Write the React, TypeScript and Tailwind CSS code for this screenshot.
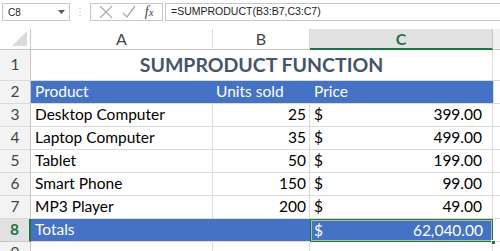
const rows = [
  { n: 3, product: 'Desktop Computer', units: '25', price: '399.00' },
  { n: 4, product: 'Laptop Computer', units: '35', price: '499.00' },
  { n: 5, product: 'Tablet', units: '50', price: '199.00' },
  { n: 6, product: 'Smart Phone', units: '150', price: '99.00' },
  { n: 7, product: 'MP3 Player', units: '200', price: '49.00' },
];

function RowHead({ n, active }: { n: number | string; active?: boolean }) {
  return (
    <div
      className={
        active
          ? 'w-[31px] shrink-0 flex items-center justify-center bg-[#e1e1e1] border-r-2 border-r-[#217346] border-b border-b-[#c6c6c6] text-[#217346] font-bold'
          : 'w-[31px] shrink-0 flex items-center justify-center bg-[#f3f3f3] border-r border-r-[#c6c6c6] border-b border-b-[#dadada] text-[#444]'
      }
    >
      {n}
    </div>
  );
}

export default function App() {
  return (
    <div className="w-[500px] h-[251px] overflow-hidden bg-white font-['Lato',sans-serif] text-[15.5px] text-black">
      {/* Formula bar */}
      <div className="h-[29px] flex items-start pt-[3px] font-['Liberation_Sans',sans-serif] text-[11px] text-[#222] bg-white">
        <div className="ml-[2px] w-[68px] h-[18px] border border-[#c6c6c6] flex items-center justify-between pl-[5px] pr-[4px]">
          <span className="text-[10px]">C8</span>
          <svg width="7" height="4" viewBox="0 0 7 4">
            <path d="M0 0 L7 0 L3.5 4 Z" fill="#555" />
          </svg>
        </div>
        <div className="w-[20px] h-[18px] flex items-center justify-center text-[#bbb] text-[10px] leading-none">⋮</div>
        <div className="w-[73px] h-[18px] border border-[#c6c6c6] flex items-center justify-around px-[4px]">
          <svg width="14" height="14" viewBox="0 0 14 14">
            <path d="M1 1 L13 13 M13 1 L1 13" stroke="#aaa" strokeWidth="1.2" fill="none" />
          </svg>
          <svg width="14" height="14" viewBox="0 0 14 14">
            <path d="M1 8 L5 12 L13 1" stroke="#aaa" strokeWidth="1.3" fill="none" />
          </svg>
          <span className="font-['Liberation_Serif',serif] italic text-[14px] text-[#444] leading-none">
            f<span className="text-[11px]">x</span>
          </span>
        </div>
        <div className="ml-[2px] flex-1 h-[18px] border border-r-0 border-[#c6c6c6] flex items-center pl-[5px] text-[10.5px]">
          =SUMPRODUCT(B3:B7,C3:C7)
        </div>
      </div>

      {/* Column headers */}
      <div className="flex h-[21px] text-[#444] text-[16px]">
        <div className="w-[31px] shrink-0 bg-white border-r border-r-[#c6c6c6] border-b border-b-[#c6c6c6] relative">
          <div className="absolute right-[3px] bottom-[3px] w-0 h-0 border-l-[15px] border-l-transparent border-b-[15px] border-b-[#dadada]" />
        </div>
        <div className="w-[182px] shrink-0 flex items-center justify-center bg-white border-r border-r-[#dadada] border-b border-b-[#c6c6c6]">A</div>
        <div className="w-[97px] shrink-0 flex items-center justify-center bg-white border-r border-r-[#dadada] border-b border-b-[#c6c6c6]">B</div>
        <div className="w-[183px] shrink-0 flex items-center justify-center bg-[#e1e1e1] border-r border-r-[#c6c6c6] border-b-2 border-b-[#217346] text-[#217346] font-bold">C</div>
        <div className="flex-1 bg-[#f0f0f0] border-b border-b-[#c6c6c6]" />
      </div>

      {/* Row 1 */}
      <div className="flex h-[31px]">
        <RowHead n={1} />
        <div className="w-[462px] shrink-0 flex items-center justify-center border-r border-r-[#dadada] border-b border-b-[#dadada] text-[#44546a] font-bold text-[19.5px]">
          SUMPRODUCT FUNCTION
        </div>
        <div className="flex-1 border-b border-b-[#dadada]" />
      </div>

      {/* Row 2 */}
      <div className="flex h-[23px]">
        <RowHead n={2} />
        <div className="w-[462px] shrink-0 flex bg-[#4472c4] text-white border-b border-b-[#dadada]">
          <div className="w-[182px] pl-[4px] flex items-center">Product</div>
          <div className="w-[97px] pl-[3px] flex items-center">Units sold</div>
          <div className="w-[183px] pl-[4px] flex items-center">Price</div>
        </div>
        <div className="flex-1 border-l border-l-[#dadada] border-b border-b-[#dadada]" />
      </div>

      {/* Rows 3-7 */}
      {rows.map((r) => (
        <div key={r.n} className="flex h-[23px]">
          <RowHead n={r.n} />
          <div className="w-[182px] shrink-0 pl-[4px] flex items-center border-r border-r-[#dadada] border-b border-b-[#dadada]">{r.product}</div>
          <div className="w-[97px] shrink-0 pr-[3px] flex items-center justify-end border-r border-r-[#dadada] border-b border-b-[#dadada]">{r.units}</div>
          <div className="w-[183px] shrink-0 pl-[4px] pr-[10px] flex items-center justify-between border-r border-r-[#dadada] border-b border-b-[#dadada]">
            <span>$</span>
            <span>{r.price}</span>
          </div>
          <div className="flex-1 border-b border-b-[#dadada]" />
        </div>
      ))}

      {/* Row 8 totals */}
      <div className="flex h-[23px]">
        <RowHead n={8} active />
        <div className="w-[279px] shrink-0 pl-[4px] flex items-center bg-[#4472c4] text-white border-b border-b-[#dadada]">Totals</div>
        <div className="w-[183px] shrink-0 relative bg-[#4472c4] text-white">
          <div className="absolute inset-0 border border-[#217346] shadow-[inset_0_0_0_1px_#a9c4a0] pl-[3px] pr-[9px] flex items-center justify-between">
            <span>$</span>
            <span>62,040.00</span>
          </div>
          <div className="absolute right-[-3px] bottom-[-3px] w-[5px] h-[5px] bg-[#217346] border border-white" />
        </div>
        <div className="flex-1 border-b border-b-[#dadada]" />
      </div>

      {/* Row 9 */}
      <div className="flex h-[23px]">
        <RowHead n={9} />
        <div className="w-[182px] shrink-0 border-r border-r-[#dadada]" />
        <div className="w-[97px] shrink-0 border-r border-r-[#dadada]" />
        <div className="w-[183px] shrink-0 border-r border-r-[#dadada]" />
        <div className="flex-1" />
      </div>
    </div>
  );
}
